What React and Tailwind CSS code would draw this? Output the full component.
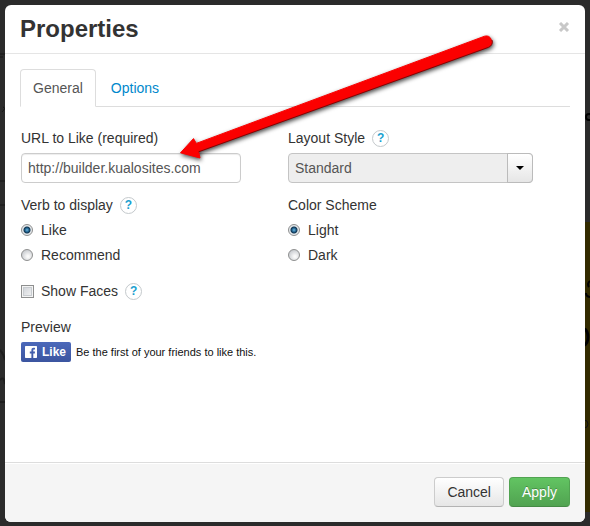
import { useState } from 'react';

const HelpButton = ({ label }) => (
  <button
    type="button"
    aria-label={label}
    className="flex items-center justify-center w-[17px] h-[17px] rounded-full border border-[#c4c9cc] bg-white text-xs leading-none font-bold text-[#1a9fd0] cursor-pointer"
  >
    ?
  </button>
);

const Radio = ({ name, value, checked, onChange }) => (
  <label className="flex items-center gap-2 h-5 cursor-pointer">
    <input
      type="radio"
      name={name}
      value={value}
      checked={checked}
      onChange={() => onChange(value)}
      className="appearance-none w-3 h-3 shrink-0 rounded-full border border-[#8e8f8f] bg-[radial-gradient(circle_at_60%_65%,#fafafa_10%,#c9ccd0_75%)] checked:bg-[radial-gradient(circle_at_50%_50%,#6fb8de_0px,#1d5f8c_2px,#12344f_3px,#e4e8eb_4px)]"
    />
    <span>{value}</span>
  </label>
);

const Backdrop = () => (
  <div aria-hidden="true" className="absolute inset-0 overflow-hidden bg-[#2b2b2b]">
    <div className="absolute right-0 top-[222px] bottom-[14px] w-10 bg-[#332b00]" />
    <svg className="absolute right-0 top-0" width="6" height="526" viewBox="0 0 6 526">
      <circle cx="5" cy="117" r="3" fill="none" stroke="#000" strokeWidth="2" />
      <path d="M6 281a4 4 0 0 0-1 6M2 293a5 4 0 0 0 4 4" fill="none" stroke="#000" strokeWidth="2" />
      <ellipse cx="0" cy="337" rx="4" ry="8" fill="none" stroke="#000" strokeWidth="3" />
      <circle cx="0" cy="424" r="4" fill="none" stroke="#111" strokeWidth="1" />
    </svg>
    <svg className="absolute left-0 top-0" width="5" height="526" viewBox="0 0 5 526">
      <path d="M0 54h5M0 57h3M3 107c3 1 1 3-1 5M0 181h5M0 205h5" fill="none" stroke="#161616" strokeWidth="1" />
      <path d="M0 350c3 3 4 5 5 10M0 380c3-3 4-2 5 4M0 402h5" fill="none" stroke="#1d1d1d" strokeWidth="2" />
    </svg>
  </div>
);

const PointerArrow = () => (
  <svg
    aria-hidden="true"
    className="absolute left-[175px] top-[30px] pointer-events-none overflow-visible drop-shadow-[1px_2px_2px_rgba(0,0,0,0.7)]"
    width="325"
    height="135"
    viewBox="175 30 325 135"
  >
    <path
      d="M180.5 152.8 193.5 138.6 196.3 143.4 484.6 36.2A5.7 5.7 0 0 1 488.6 46.8L198.6 151.3 200 158Z"
      fill="#fb0000"
      stroke="#fb0000"
      strokeWidth="1"
      strokeLinejoin="round"
    />
    <path d="M198.600 151.800 488.600 47.300A5.700 5.700 0 0 0 492 40" fill="none" stroke="#8a0000" strokeWidth="1" />
  </svg>
);

const App = () => {
  const [tab, setTab] = useState('General');
  const [url, setUrl] = useState('http://builder.kualosites.com');
  const [verb, setVerb] = useState('Like');
  const [scheme, setScheme] = useState('Light');
  const [showFaces, setShowFaces] = useState(false);

  return (
    <div className="relative flex flex-col min-h-screen px-[5px] pt-[5px] pb-1 font-['Liberation_Sans',Arial,sans-serif] text-sm leading-5 text-[#333]">
      <Backdrop />
      <div role="dialog" aria-labelledby="title" className="relative flex flex-col flex-1 rounded-md bg-white">
        <header className="flex items-center justify-between h-[49px] px-[15px] border-b border-[#e5e5e5]">
          <h3 id="title" className="text-2xl font-bold">Properties</h3>
          <button type="button" aria-label="Close" className="pb-1 cursor-pointer">
            <svg width="12" height="10" viewBox="0 0 12 10">
              <path d="M2 1 10 9M10 1 2 9" fill="none" stroke="#c8c8c8" strokeWidth="3" />
            </svg>
          </button>
        </header>

        <div className="flex-1 p-[15px]">
          <nav className="flex gap-0.5 border-b border-[#ddd]">
            {['General', 'Options'].map((name) => (
              <a
                key={name}
                href={`#${name.toLowerCase()}`}
                onClick={() => setTab(name)}
                className={`px-3 py-2 -mb-px rounded-t border ${
                  tab === name ? 'text-[#555] bg-white border-[#ddd] border-b-white' : 'text-[#0088cc] border-transparent'
                }`}
              >
                {name}
              </a>
            ))}
          </nav>

          <form className="flex flex-col gap-4 pt-[21px] pl-px">
            <div className="grid grid-cols-2 gap-y-3 pr-[15px]">
              <div className="flex flex-col gap-[5px]">
                <label htmlFor="url">URL to Like (required)</label>
                <input
                  id="url"
                  type="text"
                  value={url}
                  onChange={(e) => setUrl(e.target.value)}
                  className="w-[220px] max-w-full h-[30px] px-1.5 rounded border border-[#ccc] text-[#555] shadow-[inset_0_1px_1px_rgba(0,0,0,0.075)]"
                />
              </div>
              <div className="flex flex-col gap-[5px]">
                <div className="flex items-center gap-[7px]">
                  <label htmlFor="layout">Layout Style</label>
                  <HelpButton label="About layout style" />
                </div>
                <div className="relative w-[245px] max-w-full">
                  <select
                    id="layout"
                    className="appearance-none block w-full h-[30px] pl-1.5 pr-8 rounded border border-[#c4c4c4] bg-[#eee] text-[#555]"
                  >
                    <option>Standard</option>
                    <option>Button Count</option>
                    <option>Box Count</option>
                  </select>
                  <div className="absolute right-0 top-0 flex items-center justify-center w-[26px] h-[30px] rounded-r border border-[#bbb] bg-linear-to-b from-white to-[#e6e6e6] pointer-events-none">
                    <svg width="8" height="4" viewBox="0 0 8 4">
                      <path d="M0 0h8L4 4z" fill="#000" />
                    </svg>
                  </div>
                </div>
              </div>
              <fieldset className="flex flex-col gap-[5px]">
                <legend className="flex items-center gap-[7px] mb-[5px]">
                  Verb to display
                  <HelpButton label="About verb to display" />
                </legend>
                <Radio name="verb" value="Like" checked={verb === 'Like'} onChange={setVerb} />
                <Radio name="verb" value="Recommend" checked={verb === 'Recommend'} onChange={setVerb} />
              </fieldset>
              <fieldset className="flex flex-col gap-[5px]">
                <legend className="mb-[5px]">Color Scheme</legend>
                <Radio name="scheme" value="Light" checked={scheme === 'Light'} onChange={setScheme} />
                <Radio name="scheme" value="Dark" checked={scheme === 'Dark'} onChange={setScheme} />
              </fieldset>
            </div>

            <div className="flex items-center gap-[7px]">
              <label className="flex items-center gap-[7px] cursor-pointer">
                <input
                  type="checkbox"
                  checked={showFaces}
                  onChange={(e) => setShowFaces(e.target.checked)}
                  className="appearance-none w-[13px] h-[13px] shrink-0 border border-[#8e8f8f] bg-linear-to-br from-[#cbcfd5] to-[#f6f6f6] shadow-[inset_0_0_0_1px_#f4f4f4,inset_0_0_0_2px_#c8ccd0] checked:from-[#1d5f8c] checked:to-[#1d5f8c]"
                />
                <span>Show Faces</span>
              </label>
              <HelpButton label="About show faces" />
            </div>

            <div className="flex flex-col gap-[5px]">
              <h4>Preview</h4>
              <div className="flex items-center gap-[5px]">
                <button
                  type="button"
                  className="flex items-center gap-[5px] h-5 pl-1 pr-[5px] rounded-xs bg-linear-to-b from-[#4c69ba] to-[#3b55a0] text-xs font-bold text-white cursor-pointer"
                >
                  <svg width="12" height="12" viewBox="0 0 12 12">
                    <path
                      d="M.7 0h10.6q.7 0 .7.7v10.6q0 .7-.7.7H8.3V7.4h1.5L10 5.6H8.3V4.4c0-.5.2-.9.9-.9H10V1.9C9.800 1.900 9.300 1.800 8.700 1.800 7.300 1.800 6.400 2.600 6.400 4.200V5.600H4.800V7.400H6.400V12H.7Q0 12 0 11.300V.7Q0 0 .7 0Z"
                      fill="#fff"
                    />
                  </svg>
                  Like
                </button>
                <p className="text-[11px] text-[#111]">Be the first of your friends to like this.</p>
              </div>
            </div>
          </form>
        </div>

        <footer className="flex justify-end gap-[5px] px-[15px] pt-3.5 pb-[15px] rounded-b-md border-t border-[#ddd] bg-[#f5f5f5] shadow-[inset_0_1px_0_#fff]">
          <button
            type="button"
            className="h-[30px] px-3 rounded border border-[#ccc] border-b-[#b3b3b3] bg-linear-to-b from-white to-[#e6e6e6] cursor-pointer"
          >
            Cancel
          </button>
          <button
            type="button"
            className="h-[30px] px-3 rounded border border-[#51a351] border-b-[#458a45] bg-linear-to-b from-[#62c462] to-[#51a351] text-white [text-shadow:0_-1px_0_rgba(0,0,0,0.25)] cursor-pointer"
          >
            Apply
          </button>
        </footer>
      </div>
      <PointerArrow />
    </div>
  );
};

export default App;
